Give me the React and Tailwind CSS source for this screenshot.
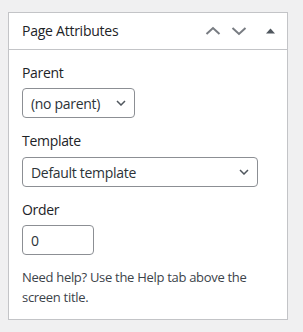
export default function App() {
  const font = { fontFamily: '"Open Sans", "Noto Sans", sans-serif' };
  return (
    <div className="min-h-[332px] w-[303px] bg-[#f0f0f1] pt-[12px] pl-[8px]" style={font}>
      <div className="w-[280px] border border-[#c3c4c7] bg-white">
        <div className="flex h-[37px] items-center border-b border-[#c3c4c7] pl-[13px] pr-[10px]">
          <h2 className="flex-1 text-[14px] font-normal leading-[20px] tracking-[-0.25px] text-[#1d2327]">Page Attributes</h2>
          <svg width="16" height="16" viewBox="0 0 16 16" className="block">
            <path d="M1.5 11 L8 5 L14.5 11" fill="none" stroke="#787c82" strokeWidth="2" />
          </svg>
          <svg width="16" height="16" viewBox="0 0 16 16" className="ml-[10px] block">
            <path d="M1.5 5 L8 11 L14.5 5" fill="none" stroke="#787c82" strokeWidth="2" />
          </svg>
          <svg width="12" height="16" viewBox="0 0 12 16" className="ml-[18px] block">
            <path d="M1 10.5 L5.5 5.5 L10 10.5 Z" fill="#50575e" />
          </svg>
        </div>
        <div className="flex flex-col items-start pl-[13px] pb-[12px] pt-[13px] tracking-[-0.3px]">
          <label className="mb-[5px] text-[14px] leading-[20px] text-[#1d2327]">Parent</label>
          <div className="flex h-[30px] w-[113px] items-center justify-between rounded-[4px] border border-[#8c8f94] pl-[8px] pr-[8px] text-[14px] text-[#2c3338]">
            <span>(no parent)</span>
            <svg width="10" height="6" viewBox="0 0 10 6">
              <path d="M1 1 L5 5 L9 1" fill="none" stroke="#50575e" strokeWidth="1.5" />
            </svg>
          </div>
          <label className="mb-[6px] mt-[13px] text-[14px] leading-[20px] text-[#1d2327]">Template</label>
          <div className="flex h-[30px] w-[236px] items-center justify-between rounded-[4px] border border-[#8c8f94] pl-[8px] pr-[8px] text-[14px] text-[#2c3338]">
            <span>Default template</span>
            <svg width="10" height="6" viewBox="0 0 10 6">
              <path d="M1 1 L5 5 L9 1" fill="none" stroke="#50575e" strokeWidth="1.5" />
            </svg>
          </div>
          <label className="mb-[5px] mt-[13px] text-[14px] leading-[20px] text-[#1d2327]">Order</label>
          <div className="flex h-[30px] w-[72px] items-center rounded-[4px] border border-[#8c8f94] pl-[8px] text-[14px] text-[#2c3338]">
            0
          </div>
          <p className="mt-[13px] pr-[12px] text-[13px] leading-[19.5px] text-[#3c434a]">
            Need help? Use the Help tab above the screen title.
          </p>
        </div>
      </div>
    </div>
  );
}
